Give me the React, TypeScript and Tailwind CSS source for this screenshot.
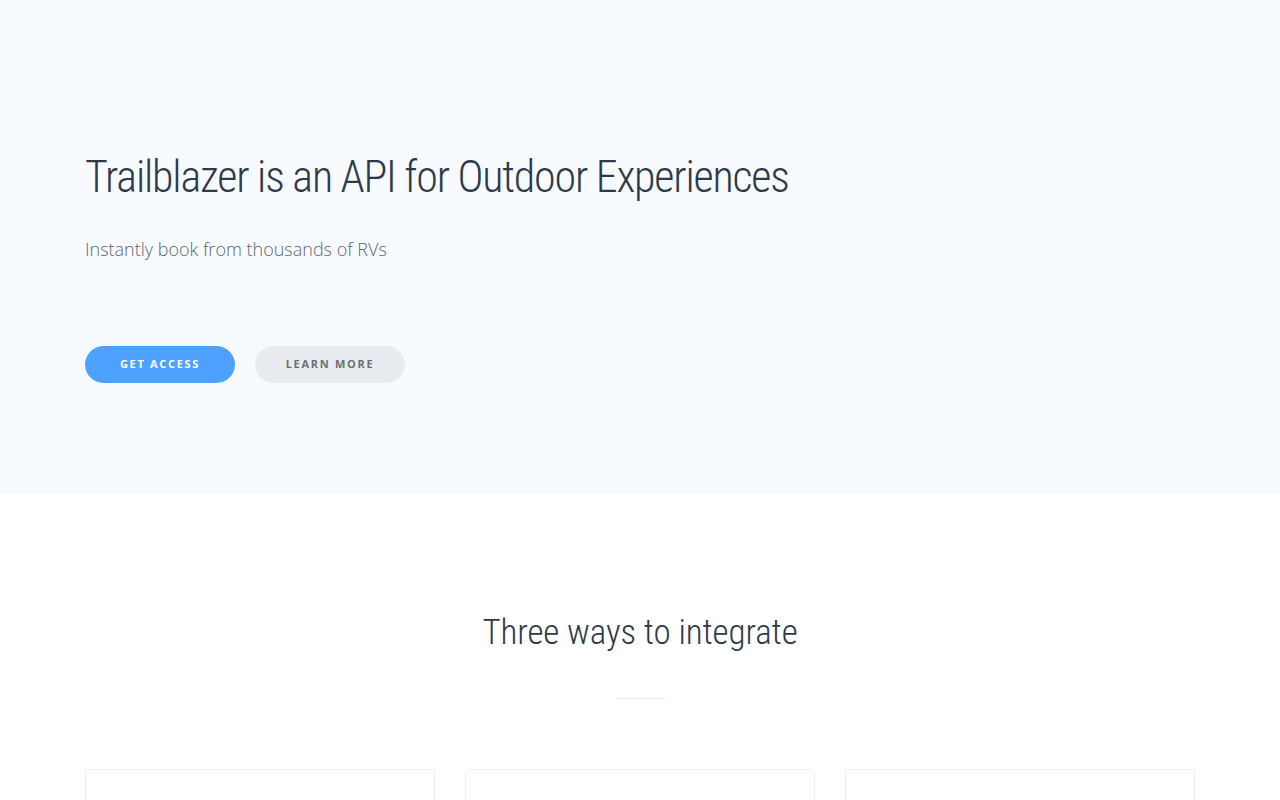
const heading = "font-['Roboto',sans-serif] font-stretch-condensed font-[350] text-[#2f3a48]";

function Card() {
  return <div className="h-[220px] rounded border border-[#eeeeee] bg-white" />;
}

export default function App() {
  return (
    <div className="min-h-screen bg-white font-['Open_Sans',sans-serif]">
      {/* Hero */}
      <section className="bg-[#f7fbff] h-[494px] px-[85px] pt-[151px]">
        <h1 className={`${heading} text-[44px] leading-[52px] tracking-[-1.2px]`}>
          Trailblazer is an API for Outdoor Experiences
        </h1>
        <p className="mt-[32px] text-[18px] leading-[28px] font-light text-[#5f6670]">
          Instantly book from thousands of RVs
        </p>
        <div className="mt-[83px] flex gap-5">
          <button className="w-[150px] h-[37px] rounded-full bg-[#4fa1ff] text-white text-[11px] font-bold tracking-[1.7px] uppercase">
            Get Access
          </button>
          <button className="w-[150px] h-[37px] rounded-full bg-[#e8ebef] text-[#6b6f75] text-[11px] font-bold tracking-[1.7px] uppercase">
            Learn More
          </button>
        </div>
      </section>

      {/* Integrations */}
      <section className="px-[85px] pt-[119px]">
        <h2 className={`${heading} text-center text-[35px] leading-[40px] tracking-[-0.1px]`}>
          Three ways to integrate
        </h2>
        <div className="mx-auto mt-[45px] w-[49px] h-px bg-[#ececec]" />
        <div className="mt-[70px] grid grid-cols-3 gap-[30px]">
          <Card />
          <Card />
          <Card />
        </div>
      </section>
    </div>
  );
}
